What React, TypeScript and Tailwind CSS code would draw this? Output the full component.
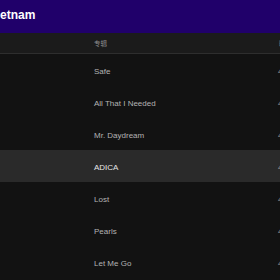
import React from "react";

const rows = [
  { title: "Safe", dur: "4:02" },
  { title: "All That I Needed", dur: "4:11" },
  { title: "Mr. Daydream", dur: "4:35" },
  { title: "ADICA", dur: "4:58", active: true },
  { title: "Lost", dur: "4:15" },
  { title: "Pearls", dur: "4:06" },
  { title: "Let Me Go", dur: "4:20" },
];

export default function App() {
  return (
    <div
      className="w-[280px] h-[280px] overflow-hidden bg-[#121212] flex flex-col"
      style={{ fontFamily: '"Liberation Sans", Arial, "Noto Sans CJK SC", sans-serif' }}
    >
      <div className="h-[33px] shrink-0 bg-[#20006a] flex items-center pb-[4px]">
        <span className="ml-[-11px] text-[12px] font-bold text-white whitespace-nowrap leading-none">
          Vietnam
        </span>
      </div>
      <div className="h-[21px] shrink-0 bg-[#1b1b1b] border-b border-[#2e2e2e] flex items-center whitespace-nowrap">
        <div className="w-[94px] shrink-0" />
        <div className="w-[185px] shrink-0 text-[6.5px] text-[#8f8f8f] leading-none" style={{ fontFamily: '"Noto Sans CJK SC", sans-serif' }}>
          专辑
        </div>
        <div className="shrink-0 text-[7px] text-[#8f8f8f] leading-none">时长</div>
      </div>
      {rows.map((r) => (
        <div
          key={r.title}
          className={`h-[32px] shrink-0 flex items-center pt-[3px] whitespace-nowrap ${
            r.active ? "bg-[#2a2a2a]" : ""
          }`}
        >
          <div className="w-[94px] shrink-0" />
          <div
            className={`w-[184px] shrink-0 text-[8px] leading-none ${
              r.active ? "text-[#e6e6e6]" : "text-[#b3b3b3]"
            }`}
          >
            {r.title}
          </div>
          <div className="shrink-0 text-[8px] leading-none text-[#9a9a9a]">{r.dur}</div>
        </div>
      ))}
    </div>
  );
}
